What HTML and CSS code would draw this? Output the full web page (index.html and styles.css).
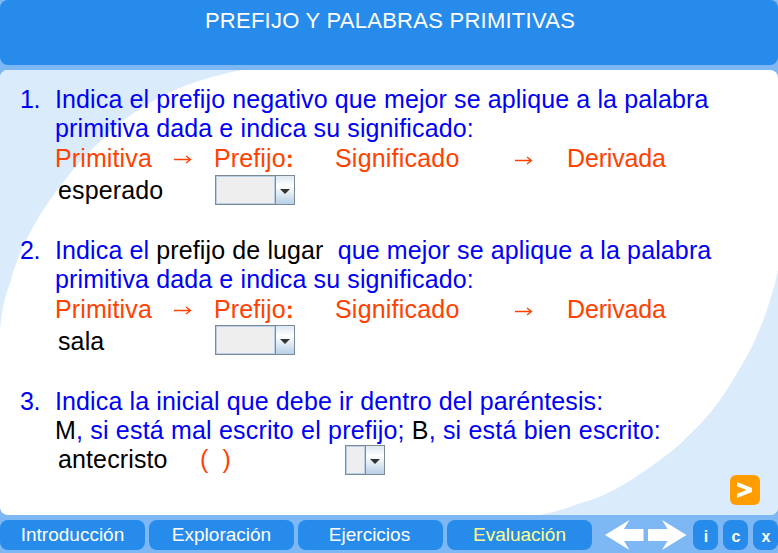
FILE: index.html
```html
<!DOCTYPE html>
<html lang="es">
<head>
<meta charset="utf-8">
<title>Prefijo y palabras primitivas</title>
<link rel="stylesheet" href="styles.css">
</head>
<body>
<div class="app">
  <header class="header"><h1>PREFIJO Y PALABRAS PRIMITIVAS</h1></header>
  <main class="panel">
    <svg class="backdrop" viewBox="0 0 778 445" aria-hidden="true">
      <path class="tint" d="M0 0H241Q212 6 187 15Q163 24 143 37Q121 50 102 70Q82 87 65 110Q45 135 33 157Q17 185 10 213Q2 233 0 259Z"/>
      <path class="tint" d="M778 200Q775 216 770 230Q765 248 758 263Q751 280 743 293L728 318Q720 331 710 343Q701 354 690 364Q680 375 668 384Q650 398 631 410Q605 427 578 434Q560 441 540 445H778Z"/>
    </svg>
    <section class="question">
      <span class="num">1.</span>
      <div class="body">
        <p>Indica el prefijo negativo que mejor se aplique a la palabra</p>
        <p>primitiva dada e indica su significado:</p>
        <div class="heads"><span>Primitiva</span><svg class="arrow" viewBox="0 0 18 9"><path d="M0 4.5H16M12 1L16.5 4.5L12 8"/></svg><span>Prefijo<b>:</b></span><span class="meaning">Significado</span><svg class="arrow low" viewBox="0 0 18 9"><path d="M0 4.5H16M12 1L16.5 4.5L12 8"/></svg><span class="derived">Derivada</span></div>
        <div class="answer"><span>esperado</span><button class="combo"><i></i></button></div>
      </div>
    </section>
    <section class="question">
      <span class="num">2.</span>
      <div class="body">
        <p>Indica el <em>prefijo de lugar</em>&nbsp; que mejor se aplique a la palabra</p>
        <p>primitiva dada e indica su significado:</p>
        <div class="heads"><span>Primitiva</span><svg class="arrow" viewBox="0 0 18 9"><path d="M0 4.5H16M12 1L16.5 4.5L12 8"/></svg><span>Prefijo<b>:</b></span><span class="meaning">Significado</span><svg class="arrow low" viewBox="0 0 18 9"><path d="M0 4.5H16M12 1L16.5 4.5L12 8"/></svg><span class="derived">Derivada</span></div>
        <div class="answer second"><span>sala</span><button class="combo"><i></i></button></div>
      </div>
    </section>
    <section class="question">
      <span class="num">3.</span>
      <div class="body">
        <p>Indica la inicial que debe ir dentro del paréntesis:</p>
        <p class="rule"><em>M</em>, si está mal escrito el prefijo; <em>B</em>, si está bien escrito:</p>
        <div class="answer third"><span>antecristo</span><span class="paren">(&nbsp; )</span><button class="combo small"><i></i></button></div>
      </div>
    </section>
    <button class="next" aria-label="Siguiente"><svg viewBox="0 0 30 30"><path d="M7 7L22 13V17L7 23V18.700L16.500 15L7 11.300Z"/></svg></button>
  </main>
  <nav class="nav">
    <a class="tab">Introducción</a><a class="tab">Exploración</a><a class="tab short">Ejercicios</a><a class="tab active">Evaluación</a>
    <svg class="moves" viewBox="0 0 82 30" aria-hidden="true"><path d="M0 15L24.5 0L19 9H38.5V21H19L24.5 30ZM81.5 15L57 0L62.5 9H43V21H62.5L57 30Z"/></svg>
    <a class="key">i</a><a class="key">c</a><a class="key">x</a>
  </nav>
</div>
</body>
</html>
```
FILE: styles.css
```css
* { box-sizing: border-box; }
body { margin: 0; overflow: hidden; font-family: "Liberation Sans", Arial, sans-serif; }
h1, p { margin: 0; font-weight: normal; }
em { font-style: normal; color: #000; }
button { padding: 0; border: 0; }
.app { width: 778px; height: 553px; background: #7db8f4; display: flex; flex-direction: column; overflow: hidden; }
.header { height: 65px; background: #278bec; border-radius: 8px; text-align: center; padding: 7px 0 0 2px; }
.header h1 { font-size: 22px; line-height: 27px; letter-spacing: 0.26px; color: #fff; white-space: nowrap; }
.panel { position: relative; height: 445px; margin-top: 5px; background: #fff; border-radius: 8px; overflow: hidden; padding: 15px 0 0 20px; }
.backdrop { position: absolute; inset: 0; width: 778px; height: 445px; }
.tint { fill: #daebfb; }
.question { position: relative; display: grid; grid-template-columns: 35px 1fr; height: 151px; font-size: 25px; line-height: 29px; letter-spacing: 0.12px; color: #0000f8; white-space: nowrap; }
.num { letter-spacing: -0.5px; }
.rule { letter-spacing: 0.19px; }
.heads { display: grid; grid-template-columns: 119px 40px 121px 180px 52px 1fr; height: 31px; line-height: 31px; color: #ff4200; align-items: center; }
.heads b { font-weight: bold; font-size: 24px; }
.meaning { letter-spacing: 0.2px; }
.derived { letter-spacing: -0.15px; }
.arrow { width: 18px; height: 9px; margin-top: 1px; fill: none; stroke: #ff4200; stroke-width: 1.3; }
.arrow.low { margin-top: 3px; }
.answer { display: grid; grid-template-columns: 157px 130px 1fr; padding-left: 3px; height: 32px; line-height: 33px; color: #000; align-items: start; }
.combo { width: 80px; height: 30px; margin-top: 1px; border: 1px solid #7a8a99; background: #eee; display: flex; justify-content: flex-end; box-shadow: inset 0 0 0 1px #b8cfe5; }
.combo i { width: 19px; border-left: 1px solid #7a8a99; height: 28px; background: linear-gradient(#dce8f3, #fff 35%, #b8cfe5); display: flex; justify-content: center; align-items: center; box-shadow: -1px 0 #b8cfe5; }
.combo i::after { content: ""; border: 5px solid transparent; border-top-color: #333; border-bottom: 0; margin-top: 2px; }
.second { margin-top: -1px; line-height: 34px; }
.third { grid-template-columns: 142px 145px 1fr; line-height: 29px; }
.paren { color: #ff4200; }
.small { width: 40px; margin-top: 0; }
.next { position: absolute; left: 730px; top: 405px; width: 30px; height: 30px; border-radius: 6px; background: #ff9d00; }
.next svg { display: block; fill: #fff; }
.nav { display: flex; padding-top: 5px; height: 38px; }
.tab, .key { height: 30px; border-radius: 8px; background: #278bec; color: #fff; text-align: center; }
.tab { width: 145px; flex: none; margin-right: 4px; font-size: 19px; line-height: 30px; }
.short { padding-right: 2px; }
.active { color: #ffff8c; }
.moves { width: 82px; height: 30px; flex: none; margin: 0 6px 0 9px; fill: #fff; }
.key { width: 25px; flex: none; margin-right: 5px; padding-left: 1px; font-weight: bold; font-size: 16px; line-height: 33px; }
```
